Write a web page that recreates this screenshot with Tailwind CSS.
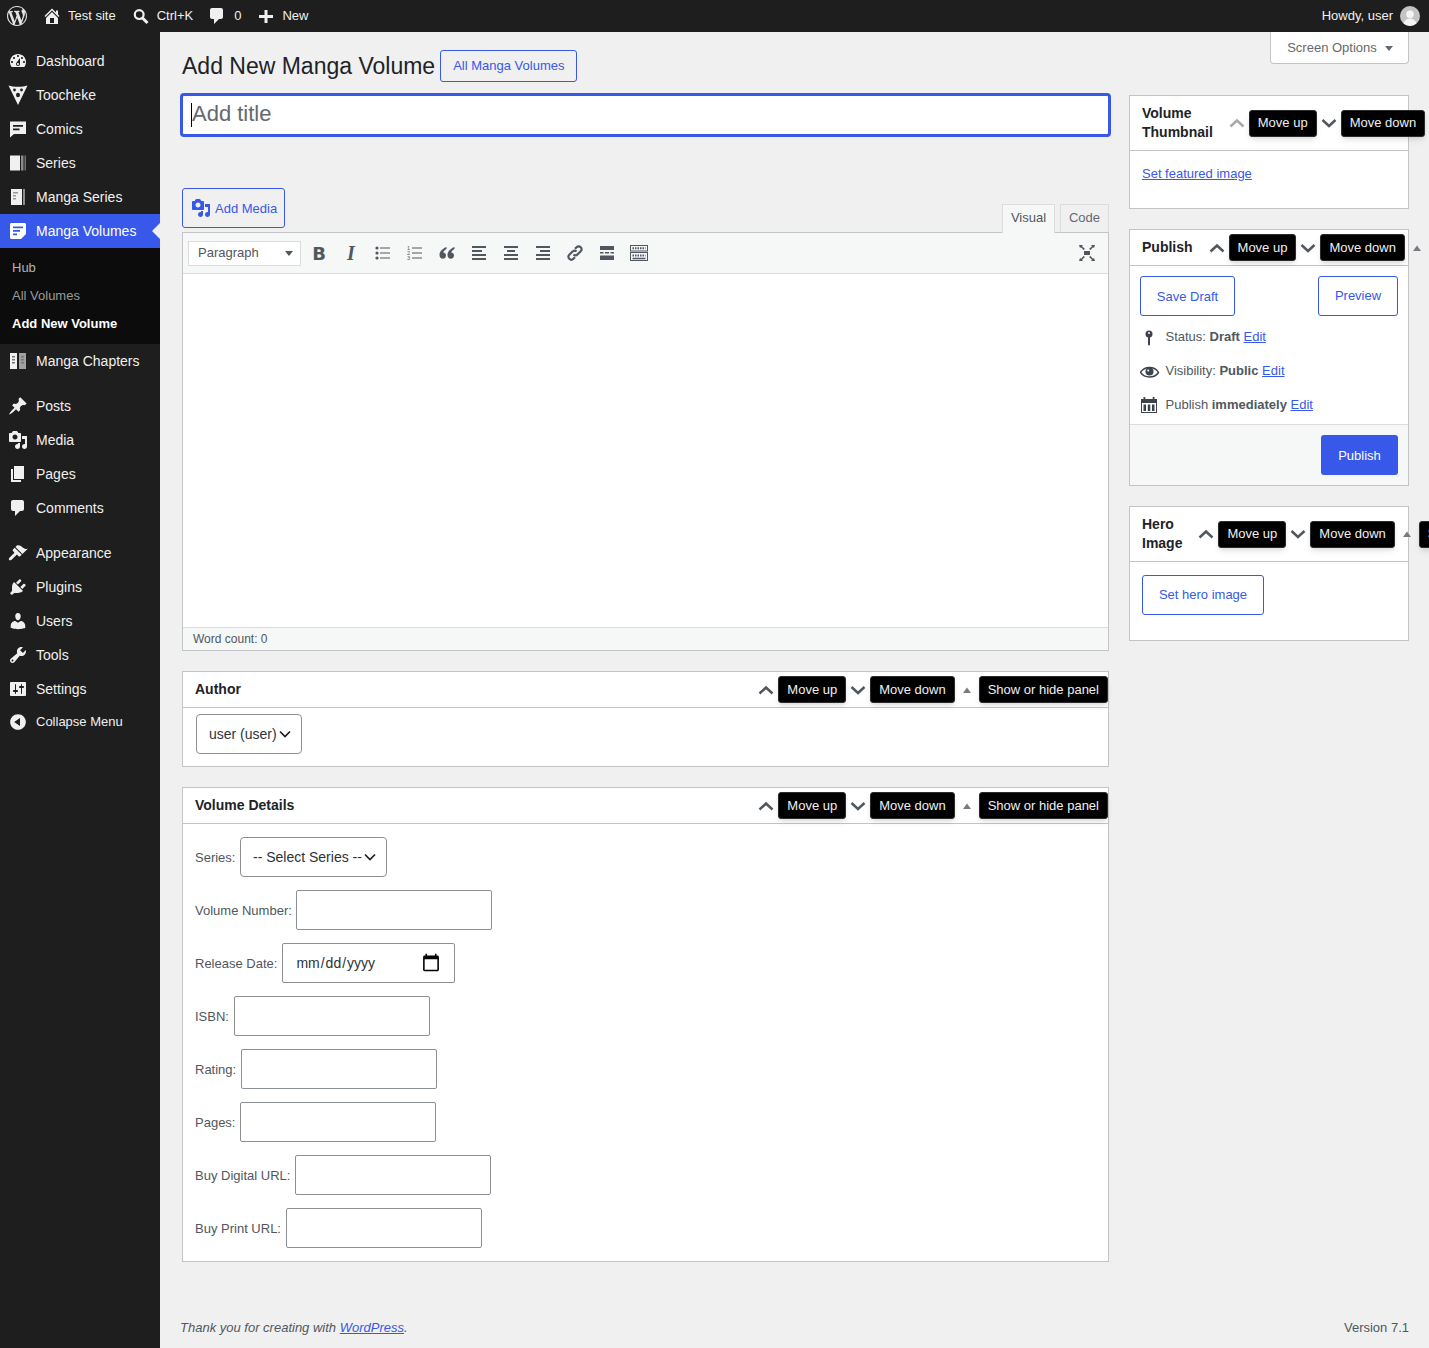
<!DOCTYPE html>
<html lang="en">

<head>
    <meta charset="UTF-8">
    <meta name="viewport" content="width=device-width, initial-scale=1.0">
    <title>Add New Manga Volume</title>
    <script src="https://cdn.jsdelivr.net/npm/@tailwindcss/browser@4"></script>
</head>

<body class="bg-[#f0f0f0] text-[13px] text-[#50575e] font-['Liberation_Sans',Arial,sans-serif] overflow-hidden">

    <!-- Admin bar -->
    <div class="h-8 bg-[#1e1e1e] text-[#f0f0f0] flex items-center justify-between">
        <div class="flex items-center pl-[7px]">
            <svg class="w-5 h-5 fill-[#e4e4e4]" viewBox="0 0 20 20"><path d="M20 10c0-5.51-4.49-10-10-10C4.48 0 0 4.49 0 10c0 5.52 4.48 10 10 10 5.51 0 10-4.48 10-10zM7.78 15.37L4.37 6.22c.55-.02 1.17-.08 1.17-.08.5-.06.44-1.13-.06-1.11 0 0-1.45.11-2.37.11-.18 0-.37 0-.58-.01C4.12 2.69 6.87 1.11 10 1.11c2.33 0 4.45.87 6.05 2.34-.68-.11-1.65.39-1.65 1.58 0 .74.45 1.36.9 2.1.35.61.55 1.36.55 2.46 0 1.49-1.4 5-1.4 5l-3.03-8.37c.54-.02.82-.17.82-.17.5-.05.44-1.25-.06-1.22 0 0-1.44.12-2.38.12-.87 0-2.33-.12-2.33-.12-.5-.03-.56 1.2-.06 1.22l.92.08 1.26 3.41zM17.41 10c.24-.64.74-1.87.43-4.25.7 1.29 1.05 2.71 1.05 4.25 0 3.29-1.73 6.24-4.4 7.78.97-2.59 1.94-5.2 2.92-7.78zM6.1 18.09C3.12 16.65 1.11 13.53 1.11 10c0-1.3.23-2.48.72-3.59C3.25 10.3 4.67 14.2 6.1 18.09zm4.03-6.63l2.58 6.98c-.86.29-1.76.45-2.71.45-.79 0-1.57-.11-2.29-.33.81-2.38 1.62-4.74 2.42-7.1z"/></svg>
            <div class="flex items-center gap-[6px] ml-[15px]">
                <svg class="w-5 h-5 fill-[#f0f0f0]" viewBox="0 0 20 20"><path d="M16 8.5l1.53 1.53-1.06 1.06L10 4.62l-6.47 6.47-1.06-1.06L10 2.5l4 4v-2h2v4zm-6-2.46l6 5.99V18H4v-5.97zM12 17v-5H8v5h4z"/></svg>
                <span>Test site</span>
            </div>
            <div class="flex items-center gap-[6px] ml-[15px]">
                <svg class="w-5 h-5" viewBox="0 0 20 20"><circle cx="8.2" cy="8.6" r="4.4" fill="none" stroke="#f0f0f0" stroke-width="2.2"/><path d="M11.5 12l5 5" stroke="#f0f0f0" stroke-width="3"/></svg>
                <span>Ctrl+K</span>
            </div>
            <div class="flex items-center gap-[7px] ml-[14px]">
                <svg class="w-5 h-5 fill-[#f0f0f0]" viewBox="0 0 20 20"><path d="M5 2h9c1.1 0 2 .9 2 2v7c0 1.1-.9 2-2 2h-2l-5 5v-5H5c-1.1 0-2-.9-2-2V4c0-1.1.9-2 2-2z"/></svg>
                <span>0</span>
            </div>
            <div class="flex items-center gap-[6px] ml-[15px]">
                <svg class="w-5 h-5 fill-[#f0f0f0]" viewBox="0 0 20 20"><path d="M17 9v3h-5.500v5h-3v-5H3V9h5.500V4h3v5z"/></svg>
                <span>New</span>
            </div>
        </div>
        <div class="flex items-center gap-[7px] pr-[9px]">
            <span>Howdy, user</span>
            <svg class="w-5 h-5" viewBox="0 0 20 20"><circle cx="10" cy="10" r="10" fill="#c4c4c4"/><circle cx="10" cy="8.2" r="3.8" fill="#f4f4f4"/><path d="M3.5 17.5c1-3.5 3.5-5 6.5-5s5.5 1.500 6.500 5A10 10 0 0 1 3.500 17.500z" fill="#f4f4f4"/></svg>
        </div>
    </div>

    <div class="flex h-[1316px]">

        <!-- Sidebar -->
        <div class="w-40 shrink-0 bg-[#1e1e1e] text-sm text-[#f0f0f0] pt-3">
            <div class="h-[34px] flex items-center pl-2 gap-2">
                <svg class="w-5 h-5 fill-[#f0f0f0]" viewBox="0 0 20 20"><path fill-rule="evenodd" d="M3.760 16h12.480c1.100-1.370 1.760-3.110 1.760-5 0-4.420-3.580-8-8-8s-8 3.580-8 8c0 1.890.66 3.630 1.760 5zM10 4c.55 0 1 .45 1 1s-.45 1-1 1-1-.45-1-1 .45-1 1-1zM6 6c.55 0 1 .45 1 1s-.45 1-1 1-1-.45-1-1 .45-1 1-1zm8 0c.55 0 1 .45 1 1s-.45 1-1 1-1-.45-1-1 .45-1 1-1zm-5.370 5.550L12 7v6c0 1.100-.9 2-2 2s-2-.9-2-2c0-.57.24-1.080.63-1.450zM4 10c.55 0 1 .45 1 1s-.45 1-1 1-1-.45-1-1 .45-1 1-1zm12 0c.55 0 1 .45 1 1s-.45 1-1 1-1-.45-1-1 .45-1 1-1zm-5 3c0-.55-.45-1-1-1s-1 .45-1 1 .45 1 1 1 1-.45 1-1z"/></svg>
                <span>Dashboard</span>
            </div>
            <div class="h-[34px] flex items-center pl-2 gap-2">
                <svg class="w-5 h-5" viewBox="0 0 20 20"><path d="M.5 .5C3 1.500 6 1.800 10 1.800S17 1.500 19.500 .5L10 20z" fill="#f0f0f0"/><circle cx="6.500" cy="5" r="1.400" fill="#1e1e1e"/><circle cx="13.500" cy="5" r="1.400" fill="#1e1e1e"/><ellipse cx="10" cy="10" rx="2" ry="2.300" fill="#1e1e1e"/></svg>
                <span>Toocheke</span>
            </div>
            <div class="h-[34px] flex items-center pl-2 gap-2">
                <svg class="w-5 h-5" viewBox="0 0 20 20"><path d="M2 2.500h16v12.500H6L2 18.500z" fill="#f0f0f0"/><path d="M5 6h10v1.800H5zM5 9.500h6.500v1.800H5z" fill="#1e1e1e"/></svg>
                <span>Comics</span>
            </div>
            <div class="h-[34px] flex items-center pl-2 gap-2">
                <svg class="w-5 h-5" viewBox="0 0 20 20"><rect x="2" y="2.500" width="10" height="15" fill="#f0f0f0"/><rect x="13" y="2.500" width="2.500" height="15" fill="#8c8c8c"/><rect x="16.500" y="2.500" width="1.500" height="15" fill="#707070"/></svg>
                <span>Series</span>
            </div>
            <div class="h-[34px] flex items-center pl-2 gap-2">
                <svg class="w-5 h-5" viewBox="0 0 20 20"><rect x="3" y="2" width="11" height="16" fill="#f0f0f0"/><rect x="15" y="2" width="2" height="16" fill="#8c8c8c"/><path d="M5 5h5v1.500H5zM5 8h3v1.500H5zM5 11h3v1.500H5z" fill="#999"/></svg>
                <span>Manga Series</span>
            </div>
            <div class="h-[34px] flex items-center pl-2 gap-2 bg-[#3858e9] text-white relative">
                <svg class="w-5 h-5" viewBox="0 0 20 20"><path d="M3.500 2h13c.8 0 1.500.7 1.500 1.500V13l-5 5H3.500C2.700 18 2 17.300 2 16.500v-13C2 2.700 2.700 2 3.500 2z" fill="#fff"/><path d="M5 5.500h10v1.800H5zM5 9h7v1.800H5zM5 12.500h4v1.800H5z" fill="#3858e9"/></svg>
                <span>Manga Volumes</span>
                <span class="absolute right-0 top-[9px] border-y-[8px] border-y-transparent border-r-[8px] border-r-[#f0f0f0]"></span>
            </div>
            <div class="bg-[#0c0c0c] text-[13px] text-[#b4b4b4] py-[6px]">
                <div class="h-7 flex items-center pl-3">Hub</div>
                <div class="h-7 flex items-center pl-3 text-[#9a9a9a]">All Volumes</div>
                <div class="h-7 flex items-center pl-3 font-bold text-white">Add New Volume</div>
            </div>
            <div class="h-[34px] flex items-center pl-2 gap-2">
                <svg class="w-5 h-5" viewBox="0 0 20 20"><rect x="2" y="2" width="7" height="16" fill="#f0f0f0"/><rect x="11" y="2" width="7" height="16" fill="#a0a0a0"/><path d="M4 5h3v1.500H4zM4 8h3v1.500H4zM4 11h3v1.500H4zM13 5h3v1.500h-3zM13 8h3v1.500h-3zM13 11h3v1.500h-3z" fill="#777"/></svg>
                <span>Manga Chapters</span>
            </div>

            <div class="h-[34px] flex items-center pl-2 gap-2 mt-[11px]">
                <svg class="w-5 h-5 fill-[#f0f0f0]" viewBox="0 0 20 20"><path d="M10.440 3.020l1.820-1.820 6.360 6.350-1.830 1.820c-1.050-.68-2.480-.57-3.410.36l-.75.75c-.92.93-1.040 2.350-.35 3.410l-1.830 1.820-2.410-2.410-2.800 2.790c-.42.42-3.380 2.710-3.800 2.290s1.860-3.390 2.280-3.810l2.790-2.790L4.100 9.360l1.830-1.820c1.050.69 2.480.57 3.400-.36l.75-.75c.93-.92 1.050-2.350.36-3.410z"/></svg>
                <span>Posts</span>
            </div>
            <div class="h-[34px] flex items-center pl-2 gap-2">
                <svg class="w-5 h-5 fill-[#f0f0f0]" viewBox="0 0 20 20"><path d="M13 11V4c0-.55-.45-1-1-1h-1.670L9 1H5L3.670 3H2c-.55 0-1 .45-1 1v7c0 .55.45 1 1 1h10c.55 0 1-.45 1-1zM7 4.500c1.380 0 2.500 1.120 2.500 2.500S8.380 9.500 7 9.500 4.500 8.380 4.500 7 5.620 4.500 7 4.500zM14 6h5v10.500c0 1.380-1.120 2.500-2.500 2.500S14 17.880 14 16.500s1.120-2.500 2.500-2.500c.17 0 .34.020.5.050V9h-3V6zm-4 8.050V13h2v3.500c0 1.380-1.120 2.500-2.500 2.500S7 17.880 7 16.500 8.120 14 9.500 14c.17 0 .34.020.5.050z"/></svg>
                <span>Media</span>
            </div>
            <div class="h-[34px] flex items-center pl-2 gap-2">
                <svg class="w-5 h-5 fill-[#f0f0f0]" viewBox="0 0 20 20"><path d="M6 15V2h10v13H6zm-1 1h8v2H3V5h2v11z"/></svg>
                <span>Pages</span>
            </div>
            <div class="h-[34px] flex items-center pl-2 gap-2">
                <svg class="w-5 h-5 fill-[#f0f0f0]" viewBox="0 0 20 20"><path d="M5 2h9c1.100 0 2 .9 2 2v7c0 1.100-.9 2-2 2h-2l-5 5v-5H5c-1.100 0-2-.9-2-2V4c0-1.100.9-2 2-2z"/></svg>
                <span>Comments</span>
            </div>

            <div class="h-[34px] flex items-center pl-2 gap-2 mt-[11px]">
                <svg class="w-5 h-5 fill-[#f0f0f0]" viewBox="0 0 20 20"><path d="M14.480 11.060L7.410 3.990l1.500-1.500c.5-.56 2.300-.47 3.510.32 1.210.8 1.430 1.280 2.910 2.100 1.180.64 2.450 1.260 4.450.85zm-.71.71L6.700 4.700 4.930 6.470c-.39.39-.39 1.020 0 1.410l1.060 1.060c.39.39.39 1.030 0 1.420-.6.6-4.950 4.900-4.950 4.900-.39.39-.1 1.500.29 1.890.39.39 1.490.2 1.880-.19 0 0 4.370-4.230 4.970-4.830.39-.39 1.020-.39 1.410 0l1.060 1.060c.39.39 1.020.39 1.410 0z"/></svg>
                <span>Appearance</span>
            </div>
            <div class="h-[34px] flex items-center pl-2 gap-2">
                <svg class="w-5 h-5 fill-[#f0f0f0]" viewBox="0 0 20 20"><path d="M13.110 4.360L9.870 7.600 8 5.730l3.240-3.240c.35-.34 1.050-.2 1.560.32.52.51.66 1.210.31 1.550zm-8 1.770l.91-1.120 9.010 9.010-1.190.84c-.71.71-2.630 1.160-3.820 1.160H6.140L4.900 17.260c-.59.59-1.540.59-2.120 0-.59-.58-.59-1.530 0-2.120l1.240-1.240v-3.880c0-1.130.4-3.190 1.090-3.890zm7.260 3.970l3.240-3.240c.34-.35 1.040-.21 1.550.31.52.51.66 1.210.31 1.550l-3.240 3.250z"/></svg>
                <span>Plugins</span>
            </div>
            <div class="h-[34px] flex items-center pl-2 gap-2">
                <svg class="w-5 h-5 fill-[#f0f0f0]" viewBox="0 0 20 20"><path d="M10 9.250c-2.270 0-2.730-3.440-2.730-3.440C7 4.020 7.820 2 9.970 2c2.160 0 2.980 2.020 2.710 3.810 0 0-.41 3.440-2.680 3.440zm0 2.570L12.720 10c2.390 0 4.520 2.330 4.520 4.530v2.490s-3.650 1.130-7.240 1.130c-3.650 0-7.240-1.130-7.240-1.130v-2.490c0-2.250 1.940-4.480 4.470-4.480z"/></svg>
                <span>Users</span>
            </div>
            <div class="h-[34px] flex items-center pl-2 gap-2">
                <svg class="w-5 h-5 fill-[#f0f0f0]" viewBox="0 0 20 20"><path d="M16.680 9.770c-1.340 1.340-3.300 1.670-4.950.99l-5.410 6.520c-.99.99-2.590.99-3.580 0s-.99-2.590 0-3.570l6.520-5.420c-.68-1.650-.35-3.610.99-4.950 1.280-1.280 3.120-1.620 4.720-1.060l-2.890 2.890 2.820 2.820 2.860-2.870c.53 1.580.18 3.390-1.080 4.650zM3.810 16.210c.4.39 1.040.39 1.430 0 .4-.4.4-1.040 0-1.430-.39-.4-1.030-.4-1.430 0-.39.39-.39 1.030 0 1.430z"/></svg>
                <span>Tools</span>
            </div>
            <div class="h-[34px] flex items-center pl-2 gap-2">
                <svg class="w-5 h-5 fill-[#f0f0f0]" viewBox="0 0 20 20"><path d="M18 16V4c0-.55-.45-1-1-1H3c-.55 0-1 .45-1 1v12c0 .55.45 1 1 1h14c.55 0 1-.45 1-1zM8 11h1c.55 0 1 .45 1 1s-.45 1-1 1H8v1.500c0 .28-.22.5-.5.5s-.5-.22-.5-.5V13H6c-.55 0-1-.45-1-1s.45-1 1-1h1V5.500c0-.28.22-.5.5-.5s.5.22.5.5V11zm5-2h-1c-.55 0-1-.45-1-1s.45-1 1-1h1V5.500c0-.28.22-.5.5-.5s.5.22.5.5V7h1c.55 0 1 .45 1 1s-.45 1-1 1h-1v5.500c0 .28-.22.5-.5.5s-.5-.22-.5-.5V9z"/></svg>
                <span>Settings</span>
            </div>
            <div class="h-[34px] flex items-center pl-2 gap-2 text-[13px] -mt-[1px]">
                <svg class="w-5 h-5 fill-[#f0f0f0]" viewBox="0 0 20 20"><path d="M10 2.160c4.330 0 7.840 3.510 7.840 7.840s-3.510 7.840-7.840 7.840S2.160 14.330 2.160 10 5.710 2.160 10 2.160zm2 11.720V6.120L6.180 9.970z"/></svg>
                <span>Collapse Menu</span>
            </div>
        </div>

        <!-- Main content -->
        <div class="flex-1 min-w-0 flex flex-col justify-between relative">

            <div class="absolute top-0 right-5 w-[139px] h-8 pl-px bg-white border border-t-0 border-[#c3c4c7] rounded-b-[4px] flex items-center justify-center gap-2 text-[#646970]">
                <span>Screen Options</span>
                <span class="mt-[2px] border-x-[4px] border-x-transparent border-t-[5px] border-t-[#646970]"></span>
            </div>

            <div class="pl-[22px] pr-5 pt-[18px]">
                <div class="flex items-center gap-[5px] h-8">
                    <h1 class="text-[23px] text-[#1d2327]">Add New Manga Volume</h1>
                    <a class="h-8 px-3 flex items-center border border-[#3858e9] rounded-[3px] text-[#3858e9]">All Manga Volumes</a>
                </div>

                <div class="flex gap-5 mt-[13px]">

                    <!-- Left column -->
                    <div class="flex-1 min-w-0">
                        <div class="relative -mx-[2px] -mt-[2px]">
                            <input type="text" placeholder="Add title" class="w-full h-[44px] pl-[9px] pb-[3px] border-[3px] border-[#3858e9] rounded-[4px] bg-white text-[22px] placeholder:text-[#646970] outline-none">
                            <span class="absolute left-[11px] top-[10px] w-px h-[24px] bg-black"></span>
                        </div>

                        <div class="flex justify-between items-end h-[44px] mt-[51px]">
                            <a class="self-start h-10 w-[103px] pl-2 flex items-center gap-[4px] border border-[#3858e9] rounded-[3px] text-[#3858e9]">
                                <svg class="w-5 h-5 fill-[#3858e9]" viewBox="0 0 20 20"><path d="M13 11V4c0-.55-.45-1-1-1h-1.670L9 1H5L3.670 3H2c-.55 0-1 .45-1 1v7c0 .55.45 1 1 1h10c.55 0 1-.45 1-1zM7 4.500c1.380 0 2.500 1.120 2.500 2.500S8.380 9.500 7 9.500 4.500 8.380 4.500 7 5.620 4.500 7 4.500zM14 6h5v10.500c0 1.380-1.120 2.500-2.500 2.500S14 17.880 14 16.500s1.120-2.500 2.500-2.500c.17 0 .34.020.5.050V9h-3V6zm-4 8.050V13h2v3.500c0 1.380-1.120 2.500-2.500 2.500S7 17.880 7 16.500 8.120 14 9.500 14c.17 0 .34.020.5.050z"/></svg>
                                <span class="pt-[2px]">Add Media</span>
                            </a>
                            <div class="flex gap-[5px] -mb-px relative z-10 text-[#646970]">
                                <div class="w-[53px] h-[29px] pb-[2px] flex items-center justify-center bg-[#f6f7f7] border border-b-0 border-[#dcdcde] text-[#50575e]">Visual</div>
                                <div class="w-[49px] h-[29px] pb-[2px] flex items-center justify-center bg-[#f0f0f0] border border-[#dcdcde] border-b-[#c3c4c7]">Code</div>
                            </div>
                        </div>

                        <!-- Editor -->
                        <div class="border border-[#c3c4c7] h-[419px] flex flex-col">
                            <div class="h-10 shrink-0 box-content border-b border-[#dcdcde] bg-[#f6f7f7] flex items-center pl-[5px] pr-[11px]">
                                <div class="w-[113px] h-[25px] bg-white border border-[#dcdcde] flex items-center justify-between pl-[9px] pr-[7px] text-[#50575e]">
                                    <span>Paragraph</span>
                                    <span class="mt-px border-x-[4px] border-x-transparent border-t-[5px] border-t-[#50575e]"></span>
                                </div>
                                <div class="flex ml-[2px] text-[#50575e]">
                                    <span class="w-8 h-8 flex items-center justify-center text-[18px] font-bold font-['DejaVu_Sans',sans-serif]">B</span>
                                    <span class="w-8 h-8 flex items-center justify-center text-[20px] italic font-bold font-['Liberation_Serif',serif]">I</span>
                                    <span class="w-8 h-8 flex items-center justify-center">
                                        <svg class="w-5 h-5" viewBox="0 0 20 20" fill="#50575e"><circle cx="4" cy="5" r="1.600"/><circle cx="4" cy="10" r="1.600"/><circle cx="4" cy="15" r="1.600"/><path d="M7 4.500h10v1H7zM7 9.500h10v1H7zM7 14.500h10v1H7z"/></svg>
                                    </span>
                                    <span class="w-8 h-8 flex items-center justify-center">
                                        <svg class="w-5 h-5" viewBox="0 0 20 20" fill="#50575e"><text x="2" y="6.500" font-size="5.500" font-family="Liberation Sans">1</text><text x="2" y="11.500" font-size="5.500" font-family="Liberation Sans">2</text><text x="2" y="16.500" font-size="5.500" font-family="Liberation Sans">3</text><path d="M7 4.500h10v1H7zM7 9.500h10v1H7zM7 14.500h10v1H7z"/></svg>
                                    </span>
                                    <span class="w-8 h-8 flex items-center justify-center">
                                        <svg class="w-5 h-5" viewBox="0 0 20 20" fill="#50575e"><path d="M9.500 4C6 5.500 2.500 8 2.500 12c0 2.200 1.400 3.800 3.300 3.800s3.200-1.400 3.200-3.200-1.300-3-2.800-3c.3-1.300 1.500-2.700 3.300-3.600zM17.500 4C14 5.500 10.500 8 10.500 12c0 2.200 1.400 3.800 3.300 3.800s3.200-1.400 3.200-3.200-1.300-3-2.800-3c.3-1.300 1.500-2.700 3.300-3.600z"/></svg>
                                    </span>
                                    <span class="w-8 h-8 flex items-center justify-center">
                                        <svg class="w-5 h-5" viewBox="0 0 20 20" fill="#50575e"><path d="M3 3h14v2H3zM3 7h10v2H3zM3 11h14v2H3zM3 15h14v2H3z"/></svg>
                                    </span>
                                    <span class="w-8 h-8 flex items-center justify-center">
                                        <svg class="w-5 h-5" viewBox="0 0 20 20" fill="#50575e"><path d="M3 3h14v2H3zM6 7h8v2H6zM3 11h14v2H3zM3 15h14v2H3z"/></svg>
                                    </span>
                                    <span class="w-8 h-8 flex items-center justify-center">
                                        <svg class="w-5 h-5" viewBox="0 0 20 20" fill="#50575e"><path d="M3 3h14v2H3zM7 7h10v2H7zM3 11h14v2H3zM3 15h14v2H3z"/></svg>
                                    </span>
                                    <span class="w-8 h-8 flex items-center justify-center">
                                        <svg class="w-5 h-5" viewBox="0 0 20 20" fill="none" stroke="#50575e" stroke-width="2.200"><path d="M8.500 11.500c1.200 1.200 3 1 4.200-.2l3-3c1.200-1.200 1.200-3 0-4.100s-3-1.200-4.100 0L10 5.800"/><path d="M11.500 8.500c-1.200-1.200-3-1-4.200.2l-3 3c-1.200 1.200-1.200 3 0 4.100s3 1.200 4.100 0L10 14.200"/></svg>
                                    </span>
                                    <span class="w-8 h-8 flex items-center justify-center">
                                        <svg class="w-5 h-5" viewBox="0 0 20 20" fill="#50575e"><path d="M3 3h14v4H3zM3 9h3.500v1.500H3zM8 9h4v1.500H8zM13.500 9H17v1.500h-3.500zM3 12.500h14V17H3z"/></svg>
                                    </span>
                                    <span class="w-8 h-8 flex items-center justify-center">
                                        <svg class="w-5 h-5" viewBox="0 0 20 20" fill="none" stroke="#50575e"><rect x="1.500" y="2.500" width="17" height="5.500"/><rect x="1.500" y="9.500" width="17" height="8"/><path stroke-dasharray="1.500 1" stroke-width="2" d="M3.500 5.200h13M3.500 12.500h13"/><path stroke-width="1.500" d="M3.500 15.500h13"/></svg>
                                    </span>
                                </div>
                                <svg class="w-5 h-5 ml-auto" viewBox="0 0 20 20" fill="#50575e"><rect x="7" y="8" width="6" height="4"/><path d="M2 2h4L5 3.200 8 6 6.500 7 4 4.200 3 5zM18 2h-4l1 1.200L12 6l1.500 1L16 4.200 17 5zM2 18h4l-1-1.200L8 14l-1.500-1L4 15.800 3 15zM18 18h-4l1-1.200-3-2.800 1.500-1 2.500 2.800L17 15z"/></svg>
                            </div>
                            <div class="flex-1 bg-white"></div>
                            <div class="h-[23px] shrink-0 border-t border-[#dcdcde] bg-[#f6f7f7] pl-[10px] flex items-center text-xs text-[#50575e]">Word count: 0</div>
                        </div>

                        <!-- Author -->
                        <div class="mt-5 border border-[#c3c4c7] bg-white">
                            <div class="flex items-center h-9 border-b border-[#c3c4c7]">
                                <h2 class="flex-1 pl-3 pb-[2px] text-sm font-bold text-[#1d2327]">Author</h2>
                                <div class="flex items-center shrink-0">
                                    <svg class="w-6 h-6" viewBox="0 0 24 24" fill="none" stroke="#50575e" stroke-width="2.500"><path d="M5.500 15.500l6.500-6 6.500 6"/></svg>
                                    <span class="h-[27px] px-2 flex items-center bg-black border border-[#2c2c2c] rounded-[3px] shadow-md text-[#f0f0f0] whitespace-nowrap">Move up</span>
                                    <svg class="w-6 h-6" viewBox="0 0 24 24" fill="none" stroke="#50575e" stroke-width="2.500"><path d="M5.500 9l6.500 6 6.500-6"/></svg>
                                    <span class="h-[27px] px-2 flex items-center bg-black border border-[#2c2c2c] rounded-[3px] shadow-md text-[#f0f0f0] whitespace-nowrap">Move down</span>
                                    <svg class="w-6 h-6" viewBox="0 0 24 24" fill="#787c82"><path d="M8 15l4-5.500 4 5.500z"/></svg>
                                    <span class="h-[27px] px-2 flex items-center bg-black border border-[#2c2c2c] rounded-[3px] shadow-md text-[#f0f0f0] whitespace-nowrap">Show or hide panel</span>
                                </div>
                            </div>
                            <div class="pt-[6px] pl-[13px] pb-3">
                                <div class="relative w-fit">
                                    <select class="appearance-none h-10 pl-3 pr-6 border border-[#8c8f94] rounded-[4px] bg-white text-sm text-[#2c3338]"><option>user (user)</option></select>
                                    <svg class="absolute right-[11px] top-[14px] w-3 h-3 pointer-events-none" viewBox="0 0 12 12" fill="none" stroke="#1e1e1e" stroke-width="1.700"><path d="M1 3.500l5 5 5-5"/></svg>
                                </div>
                            </div>
                        </div>

                        <!-- Volume details -->
                        <div class="mt-5 border border-[#c3c4c7] bg-white">
                            <div class="flex items-center h-9 border-b border-[#c3c4c7]">
                                <h2 class="flex-1 pl-3 pb-[2px] text-sm font-bold text-[#1d2327]">Volume Details</h2>
                                <div class="flex items-center shrink-0">
                                    <svg class="w-6 h-6" viewBox="0 0 24 24" fill="none" stroke="#50575e" stroke-width="2.500"><path d="M5.500 15.500l6.500-6 6.500 6"/></svg>
                                    <span class="h-[27px] px-2 flex items-center bg-black border border-[#2c2c2c] rounded-[3px] shadow-md text-[#f0f0f0] whitespace-nowrap">Move up</span>
                                    <svg class="w-6 h-6" viewBox="0 0 24 24" fill="none" stroke="#50575e" stroke-width="2.500"><path d="M5.500 9l6.500 6 6.500-6"/></svg>
                                    <span class="h-[27px] px-2 flex items-center bg-black border border-[#2c2c2c] rounded-[3px] shadow-md text-[#f0f0f0] whitespace-nowrap">Move down</span>
                                    <svg class="w-6 h-6" viewBox="0 0 24 24" fill="#787c82"><path d="M8 15l4-5.500 4 5.500z"/></svg>
                                    <span class="h-[27px] px-2 flex items-center bg-black border border-[#2c2c2c] rounded-[3px] shadow-md text-[#f0f0f0] whitespace-nowrap">Show or hide panel</span>
                                </div>
                            </div>
                            <div class="pt-[13px] pb-[13px] pl-3 flex flex-col gap-[13px]">
                                <div class="flex items-center gap-[5px]">
                                    <label class="pt-[2px]">Series:</label>
                                    <div class="relative">
                                        <select class="appearance-none h-10 pl-[11.5px] pr-[24.5px] border border-[#8c8f94] rounded-[4px] bg-white text-sm text-[#2c3338]"><option>-- Select Series --</option></select>
                                        <svg class="absolute right-[11px] top-[14px] w-3 h-3 pointer-events-none" viewBox="0 0 12 12" fill="none" stroke="#1e1e1e" stroke-width="1.700"><path d="M1 3.500l5 5 5-5"/></svg>
                                    </div>
                                </div>
                                <div class="flex items-center gap-[4px]">
                                    <label class="pt-[2px]">Volume Number:</label>
                                    <input type="number" class="w-[196px] h-10 px-2 border border-[#8c8f94] rounded-[2px] bg-white text-sm">
                                </div>
                                <div class="flex items-center gap-[5px]">
                                    <label class="pt-[2px]">Release Date:</label>
                                    <input type="date" class="w-[173px] h-10 pl-[12px] pr-[13px] border border-[#8c8f94] rounded-[2px] bg-white text-sm text-[#2c3338] [&::-webkit-calendar-picker-indicator]:w-5 [&::-webkit-calendar-picker-indicator]:h-5 [&::-webkit-calendar-picker-indicator]:p-0 [&::-webkit-calendar-picker-indicator]:m-0">
                                </div>
                                <div class="flex items-center gap-[5px]">
                                    <label class="pt-[2px]">ISBN:</label>
                                    <input type="text" class="w-[196px] h-10 px-2 border border-[#8c8f94] rounded-[2px] bg-white text-sm">
                                </div>
                                <div class="flex items-center gap-[5px]">
                                    <label class="pt-[2px]">Rating:</label>
                                    <input type="text" class="w-[196px] h-10 px-2 border border-[#8c8f94] rounded-[2px] bg-white text-sm">
                                </div>
                                <div class="flex items-center gap-[5px]">
                                    <label class="pt-[2px]">Pages:</label>
                                    <input type="number" class="w-[196px] h-10 px-2 border border-[#8c8f94] rounded-[2px] bg-white text-sm">
                                </div>
                                <div class="flex items-center gap-[5px]">
                                    <label class="pt-[2px]">Buy Digital URL:</label>
                                    <input type="url" class="w-[196px] h-10 px-2 border border-[#8c8f94] rounded-[2px] bg-white text-sm">
                                </div>
                                <div class="flex items-center gap-[5px]">
                                    <label class="pt-[2px]">Buy Print URL:</label>
                                    <input type="url" class="w-[196px] h-10 px-2 border border-[#8c8f94] rounded-[2px] bg-white text-sm">
                                </div>
                            </div>
                        </div>
                    </div>

                    <!-- Right column -->
                    <div class="w-[280px] shrink-0 flex flex-col gap-5">

                        <div class="border border-[#c3c4c7] bg-white">
                            <div class="flex items-center border-b border-[#c3c4c7]">
                                <h2 class="flex-1 px-3 py-2 text-sm leading-[19px] font-bold text-[#1d2327]">Volume Thumbnail</h2>
                                <div class="flex items-center shrink-0">
                                    <svg class="w-6 h-6" viewBox="0 0 24 24" fill="none" stroke="#a7aaad" stroke-width="2.500"><path d="M5.500 15.500l6.500-6 6.500 6"/></svg>
                                    <span class="h-[27px] px-2 flex items-center bg-black border border-[#2c2c2c] rounded-[3px] shadow-md text-[#f0f0f0] whitespace-nowrap">Move up</span>
                                    <svg class="w-6 h-6" viewBox="0 0 24 24" fill="none" stroke="#50575e" stroke-width="2.500"><path d="M5.500 9l6.500 6 6.500-6"/></svg>
                                    <span class="h-[27px] px-2 flex items-center bg-black border border-[#2c2c2c] rounded-[3px] shadow-md text-[#f0f0f0] whitespace-nowrap">Move down</span>
                                </div>
                            </div>
                            <div class="h-[57px] pl-3 pt-[13px]">
                                <a class="underline text-[#3858e9]">Set featured image</a>
                            </div>
                        </div>

                        <div class="border border-[#c3c4c7] bg-white">
                            <div class="flex items-center border-b border-[#c3c4c7]">
                                <h2 class="flex-1 px-3 py-2 text-sm leading-[19px] font-bold text-[#1d2327]">Publish</h2>
                                <div class="flex items-center shrink-0">
                                    <svg class="w-6 h-6" viewBox="0 0 24 24" fill="none" stroke="#50575e" stroke-width="2.500"><path d="M5.500 15.500l6.500-6 6.500 6"/></svg>
                                    <span class="h-[27px] px-2 flex items-center bg-black border border-[#2c2c2c] rounded-[3px] shadow-md text-[#f0f0f0] whitespace-nowrap">Move up</span>
                                    <svg class="w-6 h-6" viewBox="0 0 24 24" fill="none" stroke="#50575e" stroke-width="2.500"><path d="M5.500 9l6.500 6 6.500-6"/></svg>
                                    <span class="h-[27px] px-2 flex items-center bg-black border border-[#2c2c2c] rounded-[3px] shadow-md text-[#f0f0f0] whitespace-nowrap">Move down</span>
                                    <svg class="w-6 h-6" viewBox="0 0 24 24" fill="#787c82"><path d="M8 15l4-5.500 4 5.500z"/></svg>
                                </div>
                            </div>
                            <div class="px-[10px] pt-[10px] pb-[2px]">
                                <div class="flex justify-between">
                                    <a class="w-[95px] h-10 pt-[2px] flex items-center justify-center border border-[#3858e9] rounded-[3px] text-[#3858e9]">Save Draft</a>
                                    <a class="w-[80px] h-10 flex items-center justify-center border border-[#3858e9] rounded-[3px] text-[#3858e9]">Preview</a>
                                </div>
                                <div class="mt-1">
                                    <div class="h-[34px] flex items-center gap-[5.5px]">
                                        <svg class="w-5 h-5" viewBox="0 0 20 20" fill="#3c434a"><circle cx="9" cy="7" r="3.500"/><rect x="8" y="9" width="2" height="9.500" rx="1"/><circle cx="9" cy="6" r="1" fill="#fff"/></svg>
                                        <span>Status: <b>Draft</b> <a class="underline text-[#3858e9]">Edit</a></span>
                                    </div>
                                    <div class="h-[34px] flex items-center gap-[5.5px]">
                                        <svg class="w-5 h-5" viewBox="0 0 20 20"><path d="M.5 11.500C2.500 8 5.500 6.500 9.500 6.500s7 1.500 9 5c-2 3-5 4.500-9 4.500s-7-1.500-9-4.500z" fill="none" stroke="#3c434a" stroke-width="1.500"/><circle cx="9.500" cy="10.500" r="4" fill="#3c434a"/><circle cx="8.200" cy="9.500" r="1" fill="#fff"/></svg>
                                        <span>Visibility: <b>Public</b> <a class="underline text-[#3858e9]">Edit</a></span>
                                    </div>
                                    <div class="h-[34px] flex items-center gap-[5.5px]">
                                        <svg class="w-5 h-5" viewBox="0 0 20 20" fill="#3c434a"><path d="M1 4h2.500V2h1.800v2h7.400V2h1.800v2H17v14H1zM2 8v9h14V8z"/><path d="M3.500 9.500h2.500V16H3.500zM7.800 9.500h2.500V16H7.800zM12 9.500h2.500V16H12z"/></svg>
                                        <span>Publish <b>immediately</b> <a class="underline text-[#3858e9]">Edit</a></span>
                                    </div>
                                </div>
                            </div>
                            <div class="border-t border-[#dcdcde] bg-[#f6f7f7] p-[10px] flex justify-end">
                                <a class="w-[77px] h-10 pt-[2px] flex items-center justify-center bg-[#3858e9] rounded-[3px] text-white">Publish</a>
                            </div>
                        </div>

                        <div class="border border-[#c3c4c7] bg-white">
                            <div class="flex items-center border-b border-[#c3c4c7]">
                                <h2 class="flex-1 px-3 py-2 text-sm leading-[19px] font-bold text-[#1d2327]">Hero Image</h2>
                                <div class="flex items-center shrink-0">
                                    <svg class="w-6 h-6" viewBox="0 0 24 24" fill="none" stroke="#50575e" stroke-width="2.500"><path d="M5.500 15.500l6.500-6 6.500 6"/></svg>
                                    <span class="h-[27px] px-2 flex items-center bg-black border border-[#2c2c2c] rounded-[3px] shadow-md text-[#f0f0f0] whitespace-nowrap">Move up</span>
                                    <svg class="w-6 h-6" viewBox="0 0 24 24" fill="none" stroke="#50575e" stroke-width="2.500"><path d="M5.500 9l6.500 6 6.500-6"/></svg>
                                    <span class="h-[27px] px-2 flex items-center bg-black border border-[#2c2c2c] rounded-[3px] shadow-md text-[#f0f0f0] whitespace-nowrap">Move down</span>
                                    <svg class="w-6 h-6" viewBox="0 0 24 24" fill="#787c82"><path d="M8 15l4-5.500 4 5.500z"/></svg>
                                    <span class="h-[27px] px-2 flex items-center bg-black border border-[#2c2c2c] rounded-[3px] shadow-md text-[#f0f0f0] whitespace-nowrap">Show or hide panel</span>
                                </div>
                            </div>
                            <div class="pl-3 pt-[13px] pb-[25px]">
                                <a class="w-[122px] h-10 flex items-center justify-center border border-[#3858e9] rounded-[3px] text-[#3858e9]">Set hero image</a>
                            </div>
                        </div>

                    </div>
                </div>
            </div>

            <!-- Footer -->
            <div class="flex justify-between pl-5 pr-5 pb-[11px]">
                <span class="italic">Thank you for creating with <a class="underline text-[#3858e9]">WordPress</a>.</span>
                <span>Version 7.1</span>
            </div>
        </div>
    </div>

</body>

</html>
